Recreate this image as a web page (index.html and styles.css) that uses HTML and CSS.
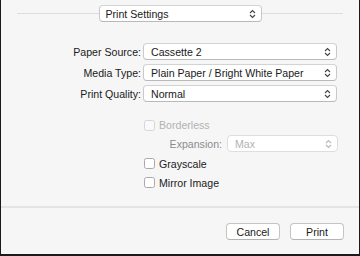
FILE: index.html
```html
<!DOCTYPE html>
<html lang="en">
<head>
  <meta charset="UTF-8">
  <meta name="viewport" content="width=device-width, initial-scale=1.0">
  <title>Print Settings</title>
  <link rel="stylesheet" href="styles.css">
</head>
<body>
  <div class="window">

    <!-- top popup with rules either side -->
    <div class="header">
      <div class="rule"></div>
      <div class="popup popup-title">
        <span>Print Settings</span>
        <svg class="chev" width="7" height="10" viewBox="0 0 7 10"><polyline points="1,4 3.5,1.5 6,4"/><polyline points="1,6 3.5,8.5 6,6"/></svg>
      </div>
      <div class="rule"></div>
    </div>

    <div class="form">
      <label>Paper Source:</label>
      <div class="popup">
        <span>Cassette 2</span>
        <svg class="chev" width="7" height="10" viewBox="0 0 7 10"><polyline points="1,4 3.5,1.5 6,4"/><polyline points="1,6 3.5,8.5 6,6"/></svg>
      </div>
      <label>Media Type:</label>
      <div class="popup">
        <span>Plain Paper / Bright White Paper</span>
        <svg class="chev" width="7" height="10" viewBox="0 0 7 10"><polyline points="1,4 3.5,1.5 6,4"/><polyline points="1,6 3.5,8.5 6,6"/></svg>
      </div>
      <label>Print Quality:</label>
      <div class="popup">
        <span>Normal</span>
        <svg class="chev" width="7" height="10" viewBox="0 0 7 10"><polyline points="1,4 3.5,1.5 6,4"/><polyline points="1,6 3.5,8.5 6,6"/></svg>
      </div>
    </div>

    <div class="options">
      <div class="check-row disabled borderless">
        <span class="box"></span>Borderless
      </div>
      <div class="expansion">
        <label>Expansion:</label>
        <div class="popup disabled">
          <span>Max</span>
          <svg class="chev" width="7" height="10" viewBox="0 0 7 10"><polyline points="1,4 3.5,1.5 6,4"/><polyline points="1,6 3.5,8.5 6,6"/></svg>
        </div>
      </div>
      <div class="check-row">
        <span class="box"></span>Grayscale
      </div>
      <div class="check-row">
        <span class="box"></span>Mirror Image
      </div>
    </div>

    <div class="separator"></div>

    <div class="buttons">
      <button>Cancel</button>
      <button>Print</button>
    </div>
  </div>
</body>
</html>
```

FILE: styles.css
```css
body {
  margin: 0;
  font-family: "Liberation Sans", Arial, sans-serif;
  font-size: 10.6px;
  color: #1a1a1a;
}
.window {
  width: 360px;
  height: 256px;
  box-sizing: border-box;
  background: #f6f6f6;
  border-left: 1px solid #1a1a1a;
  border-right: 1px solid #1a1a1a;
  border-bottom: 2px solid #1a1a1a;
}
.header {
  display: flex;
  align-items: center;
  padding: 5px 16px 0 16px;
}
.rule {
  flex: 1;
  height: 1px;
  background: #dcdcdc;
}
.popup {
  display: flex;
  align-items: center;
  justify-content: space-between;
  height: 17px;
  box-sizing: border-box;
  padding: 0 5px 0 7px;
  background: #fff;
  border: 1px solid #c9c9c9;
  border-top-color: #d3d3d3;
  border-bottom-color: #b9b9b9;
  border-radius: 4px;
}
.popup-title {
  width: 163px;
  padding-left: 6px;
}
.chev {
  fill: none;
  stroke: #444;
  stroke-width: 1.1;
}
.form {
  display: grid;
  grid-template-columns: 140px 194px;
  column-gap: 2px;
  row-gap: 4px;
  margin-top: 21px;
}
.form label {
  text-align: right;
  align-self: center;
}
.options {
  margin: 13px 0 0 143px;
  width: 194px;
}
.check-row {
  display: flex;
  align-items: center;
  height: 19px;
}
.borderless {
  height: 20px;
}
.box {
  width: 11px;
  height: 11px;
  box-sizing: border-box;
  margin-right: 4px;
  background: #fff;
  border: 1px solid #a9a9a9;
  border-radius: 2.5px;
}
.disabled {
  color: #b2b2b2;
}
.disabled .box {
  background: #f9f9f9;
  border-color: #d6d6d6;
}
.popup.disabled {
  border-color: #dedede;
}
.popup.disabled .chev {
  stroke: #b8b8b8;
}
.expansion {
  display: flex;
  align-items: center;
  justify-content: flex-end;
  gap: 5px;
  margin-bottom: 2px;
}
.expansion label {
  color: #8c8c8c;
}
.expansion .popup {
  width: 111px;
}
.separator {
  height: 2px;
  margin-top: 14px;
  background: #e4e4e4;
}
.buttons {
  display: flex;
  justify-content: flex-end;
  gap: 10px;
  padding: 15px 15px 0 0;
}
button {
  width: 54px;
  height: 17px;
  padding: 0;
  font-family: inherit;
  font-size: inherit;
  color: #1a1a1a;
  background: #fff;
  border: 1px solid #c4c4c4;
  border-bottom-color: #b3b3b3;
  border-radius: 4px;
}
```
